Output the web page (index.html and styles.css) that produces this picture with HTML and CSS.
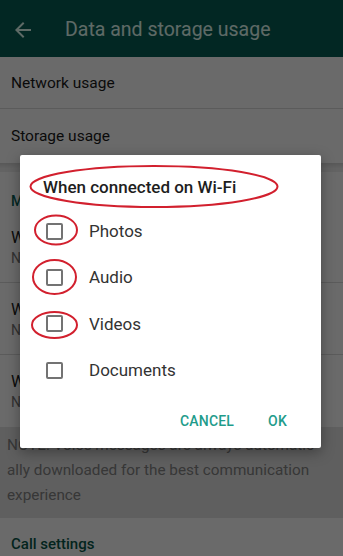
FILE: index.html
```html
<!DOCTYPE html>
<html lang="en">
<head>
<meta charset="utf-8">
<title>Data and storage usage</title>
<link rel="stylesheet" href="styles.css">
</head>
<body>
<div class="app">
  <header class="appbar">
    <svg class="back" width="24" height="24" viewBox="0 0 24 24"><path d="M20 11H7.83l5.59-5.59L12 4l-8 8 8 8 1.41-1.41L7.83 13H20v-2z"/></svg>
    <h1 class="title">Data and storage usage</h1>
  </header>
  <div class="row single divided">Network usage</div>
  <div class="row single">Storage usage</div>
  <div class="band"></div>
  <div class="section-head">Media auto-download</div>
  <div class="row double divided">
    <div class="row-title">When using mobile data</div>
    <div class="row-sub">No media</div>
  </div>
  <div class="row double divided">
    <div class="row-title">When connected on Wi-Fi</div>
    <div class="row-sub">No media</div>
  </div>
  <div class="row double">
    <div class="row-title">When roaming</div>
    <div class="row-sub">No media</div>
  </div>
  <div class="note">NOTE: Voice messages are always automatic<wbr>ally downloaded for the best communication experience</div>
  <div class="section-head call">Call settings</div>

  <div class="scrim"></div>

  <div class="dialog">
    <div class="dialog-title">When connected on Wi-Fi</div>
    <ul class="options">
      <li class="option"><span class="box"></span><span>Photos</span></li>
      <li class="option"><span class="box"></span><span>Audio</span></li>
      <li class="option"><span class="box"></span><span>Videos</span></li>
      <li class="option"><span class="box"></span><span>Documents</span></li>
    </ul>
    <div class="actions">
      <span class="btn">CANCEL</span>
      <span class="btn">OK</span>
    </div>
    <svg class="marks" width="301" height="293" viewBox="0 0 301 293">
      <ellipse cx="134" cy="31.5" rx="123.5" ry="20.5"/>
      <ellipse cx="36" cy="75" rx="21" ry="14.5"/>
      <ellipse cx="34.5" cy="122" rx="21.5" ry="17"/>
      <ellipse cx="34.5" cy="170" rx="22.5" ry="13"/>
    </svg>
  </div>
</div>
</body>
</html>
```

FILE: styles.css
```css
* { box-sizing: border-box; }
html, body { margin: 0; padding: 0; }
body {
  font-family: Roboto, "Noto Sans", "Liberation Sans", sans-serif;
  background: #fff;
}
.app {
  position: relative;
  width: 343px;
  height: 556px;
  overflow: hidden;
  background: #fff;
}
.appbar {
  height: 57px;
  background: #075e54;
  display: flex;
  align-items: center;
  padding-left: 11px;
  padding-top: 2px;
}
.back { fill: #e2fff6; flex: none; }
.title {
  margin: 0 0 0 30px;
  font-size: 19.5px;
  font-weight: 400;
  color: #e2fff6;
}
.row {
  padding-left: 11px;
  color: #1a1a1a;
}
.row.single {
  height: 52px;
  display: flex;
  align-items: center;
  font-size: 15.5px;
}
.row.single + .row.single { height: 54px; }
.divided { border-bottom: 1px solid #dcdcdc; }
.band {
  height: 9px;
  background: linear-gradient(#d2d2d2, #efefef 60%);
}
.section-head {
  height: 39px;
  padding: 20px 0 0 11px;
  font-size: 14px;
  line-height: 18px;
  font-weight: 500;
  color: #075e54;
}
.row.double {
  height: 72px;
  padding-top: 16px;
}
.row-title { font-size: 16px; line-height: 21px; }
.row-sub { font-size: 14px; line-height: 20px; color: #777; }
.note {
  background: #e4e4e4;
  padding: 6px 15px 10px 7px;
  font-size: 15.3px;
  line-height: 25px;
  color: #858585;
}
.section-head.call {
  height: auto;
  padding-top: 18px;
  font-size: 15px;
  line-height: 16px;
  color: #08584a;
}
.scrim {
  position: absolute;
  inset: 0;
  background: rgba(0, 0, 0, 0.585);
}
.dialog {
  position: absolute;
  left: 20px;
  top: 155px;
  width: 301px;
  height: 293px;
  background: #fff;
  border-radius: 2px;
  box-shadow: 0 4px 14px rgba(0, 0, 0, 0.35);
  padding-top: 20px;
}
.dialog-title {
  padding-left: 23px;
  font-size: 17px;
  line-height: 24px;
  font-weight: 500;
  color: #1e1e1e;
}
.options {
  list-style: none;
  margin: 9px 0 0;
  padding: 0;
}
.option {
  height: 46.3px;
  display: flex;
  align-items: center;
  padding-left: 26px;
  gap: 26px;
  font-size: 17px;
  color: #333;
}
.box {
  width: 17px;
  height: 17px;
  border: 2px solid #737373;
  border-radius: 2px;
  flex: none;
}
.actions {
  margin-top: 18px;
  display: flex;
  justify-content: flex-end;
  gap: 34px;
  padding-right: 34px;
}
.btn {
  font-size: 14px;
  line-height: 20px;
  font-weight: 500;
  color: #1f9c8b;
  letter-spacing: 0.2px;
}
.marks {
  position: absolute;
  left: 0;
  top: 0;
  pointer-events: none;
}
.marks ellipse {
  fill: none;
  stroke: #d2202e;
  stroke-width: 2;
}
```
